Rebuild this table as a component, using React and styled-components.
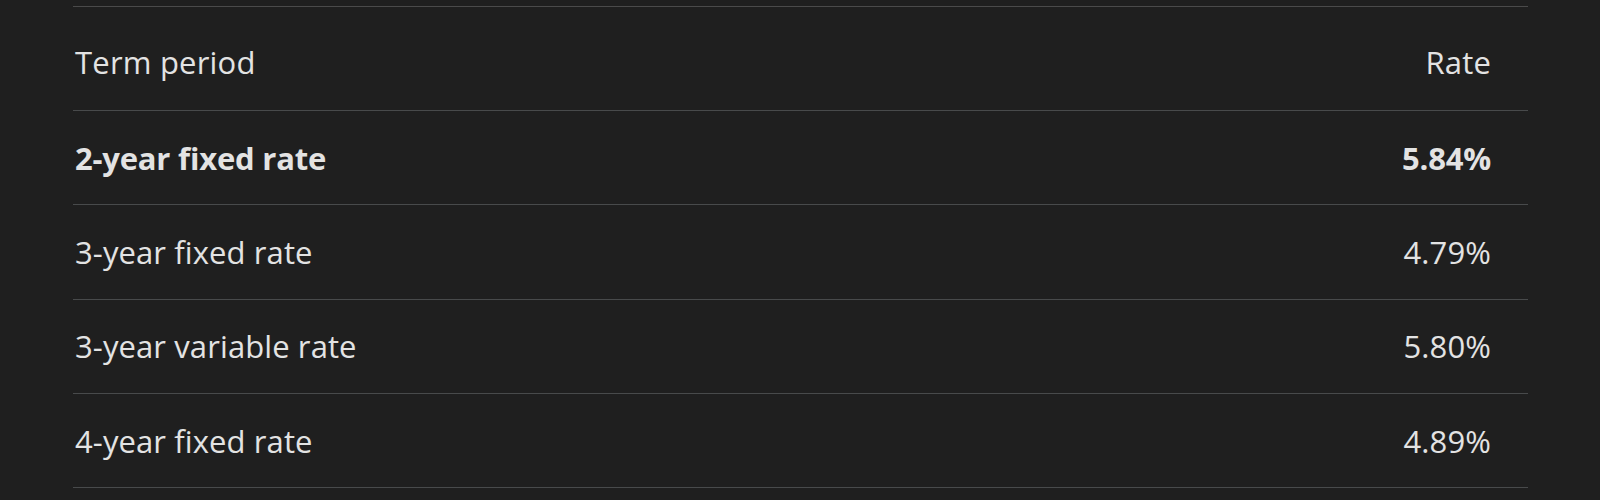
import React from "react";
import styled, { createGlobalStyle } from "styled-components";

const Global = createGlobalStyle`
  html, body { margin: 0; padding: 0; background: #1f1f1f; }
  body { font-family: "Open Sans", "Noto Sans", sans-serif; color: #e3e3e3; }
`;

const Page = styled.div`
  padding: 6px 72px 0 73px;
  height: 494px;
  overflow: hidden;
`;

const Table = styled.table`
  width: 100%;
  border-collapse: collapse;
  border-top: 1px solid #4a4a4a;
`;

const Row = styled.tr`
  height: ${(p) => (p.$head ? "104px" : "94.3px")};
  border-bottom: 1px solid #484a4b;
`;

const Cell = styled.td`
  padding: 0 37px 0 2px;
  font-size: 31px;
  font-weight: ${(p) => (p.$bold ? 700 : 400)};
  text-align: ${(p) => (p.$right ? "right" : "left")};
  vertical-align: middle;
  letter-spacing: ${(p) => (p.$bold ? "-0.2px" : "0.1px")};
  white-space: nowrap;
`;

const HeadCell = styled(Cell).attrs({ as: "th" })`
  font-weight: 400;
  letter-spacing: 0.2px;
  padding-top: 6px;
`;

const rows = [
  { term: "2-year fixed rate", rate: "5.84%", bold: true },
  { term: "3-year fixed rate", rate: "4.79%" },
  { term: "3-year variable rate", rate: "5.80%" },
  { term: "4-year fixed rate", rate: "4.89%" },
];

export default function App() {
  return (
    <>
      <Global />
      <Page>
        <Table>
          <thead>
            <Row $head>
              <HeadCell>Term period</HeadCell>
              <HeadCell $right>Rate</HeadCell>
            </Row>
          </thead>
          <tbody>
            {rows.map((r) => (
              <Row key={r.term}>
                <Cell $bold={r.bold}>{r.term}</Cell>
                <Cell $bold={r.bold} $right>
                  {r.rate}
                </Cell>
              </Row>
            ))}
          </tbody>
        </Table>
      </Page>
    </>
  );
}
